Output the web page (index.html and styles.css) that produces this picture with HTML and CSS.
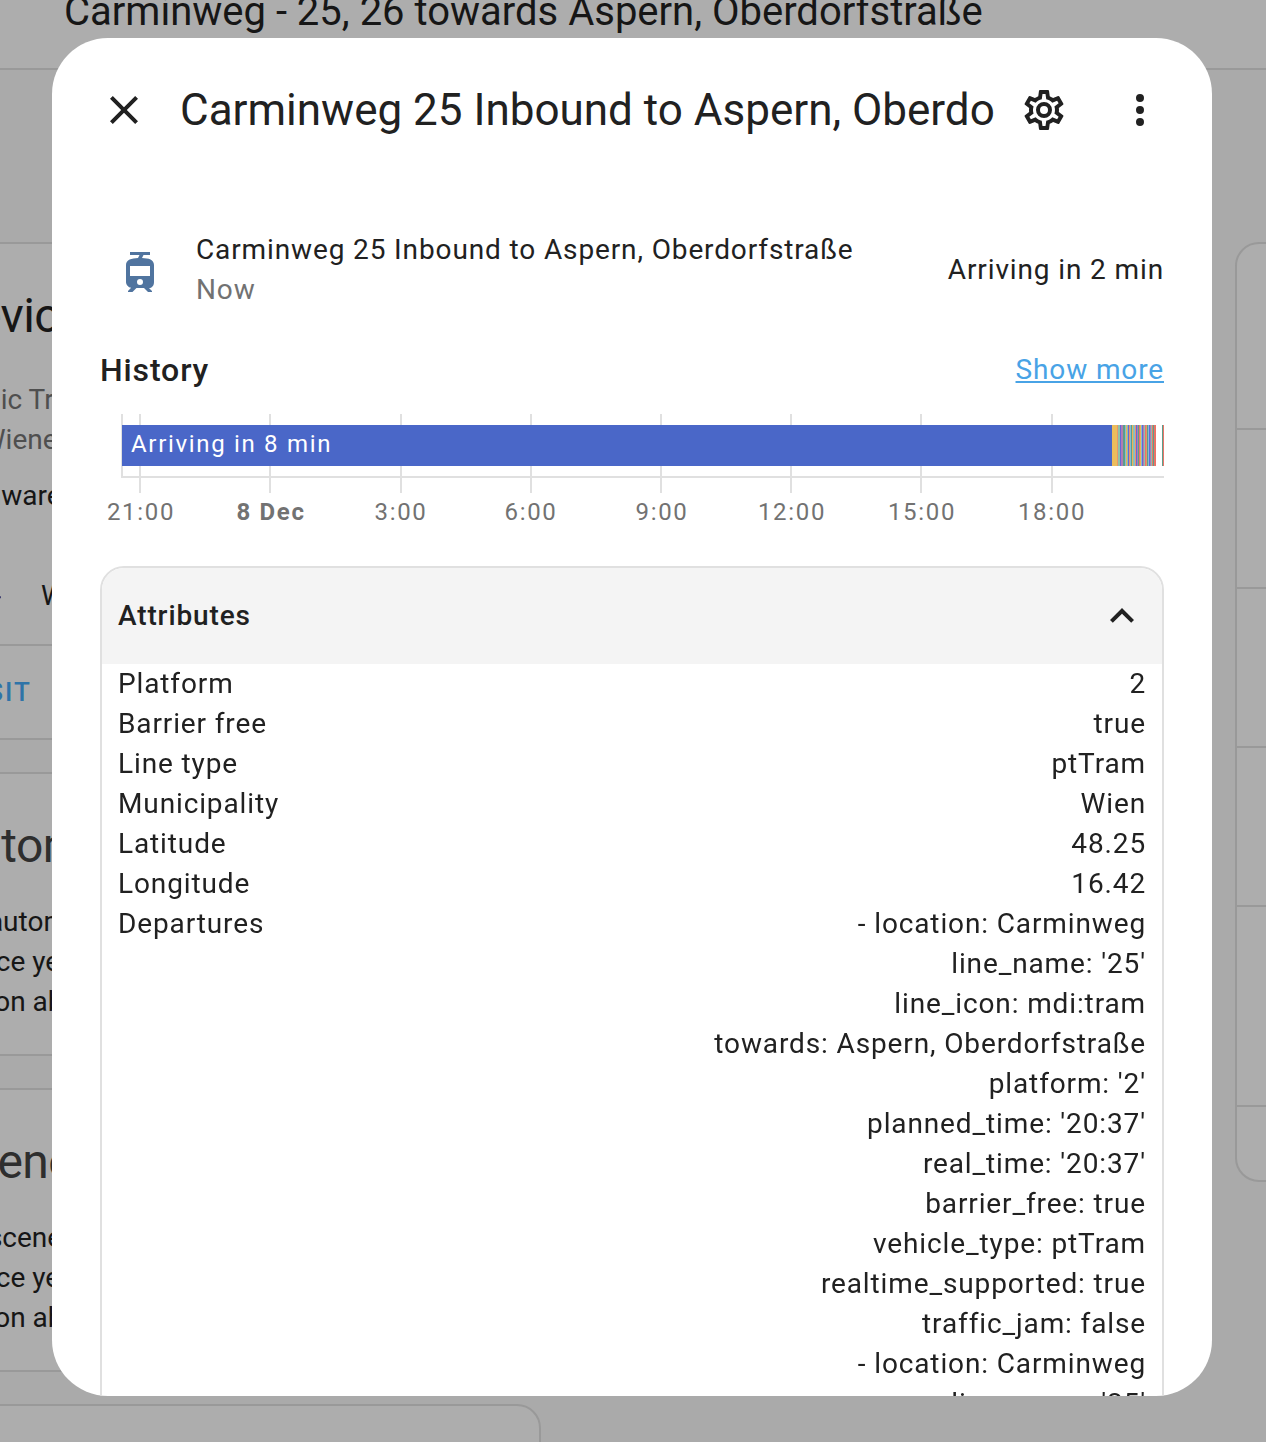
FILE: index.html
```html
<!DOCTYPE html>
<html lang="en">
<head>
<meta charset="utf-8">
<meta name="viewport" content="width=device-width, initial-scale=1">
<title>Carminweg 25 Inbound to Aspern, Oberdorfstraße</title>
<link rel="stylesheet" href="styles.css">
</head>
<body>
<div class="page">
  <header class="toolbar"><h1 class="toolbar-title">Carminweg - 25, 26 towards Aspern, Oberdorfstraße</h1></header>
  <main class="columns">
    <div class="column">
      <section class="card">
        <h2 class="card-title device-title">Device info</h2>
        <div class="card-body">
          <p class="muted">Public Transport<br>by Wiener Linien</p>
          <p class="firmware">Firmware: 1.0</p>
          <div class="brand">
            <svg class="brand-logo" viewBox="0 0 56 32" aria-hidden="true"><path d="M44 7h11v2H44z" fill="#9c5555"/><path d="M44 17h10l2-1v2l-2 1H44z" fill="#3f3f70"/></svg>
            <span>Wiener Linien</span>
          </div>
        </div>
        <div class="card-actions"><a class="visit" href="#visit">Visit</a></div>
      </section>
      <section class="card">
        <h2 class="card-title">Automations</h2>
        <p class="card-body">No automations use this<br>device yet. Use the<br>button above.</p>
      </section>
      <section class="card">
        <h2 class="card-title">Scenes</h2>
        <p class="card-body">No scenes use this<br>device yet. Use the<br>button above.</p>
      </section>
      <section class="card">
        <h2 class="card-title">Scripts</h2>
      </section>
    </div>
    <div class="column"></div>
    <div class="column">
      <ul class="card log">
        <li class="log-first"></li>
        <li class="log-item"></li>
        <li class="log-item"></li>
        <li class="log-item"></li>
        <li class="log-tall"></li>
        <li class="log-last"></li>
      </ul>
    </div>
  </main>
</div>

<div class="scrim">
  <section class="dialog" role="dialog" aria-modal="true" aria-labelledby="dialog-title">
    <header class="dialog-header">
      <button class="icon-button" type="button" aria-label="Close">
        <svg class="icon" viewBox="0 0 24 24"><path d="M19,6.41L17.59,5L12,10.59L6.41,5L5,6.41L10.59,12L5,17.59L6.41,19L12,13.41L17.59,19L19,17.59L13.41,12L19,6.41Z"/></svg>
      </button>
      <h2 class="dialog-title" id="dialog-title">Carminweg 25 Inbound to Aspern, Oberdorfstraße</h2>
      <button class="icon-button" type="button" aria-label="Settings">
        <svg class="icon" viewBox="0 0 24 24"><path d="M12,8A4,4 0 0,1 16,12A4,4 0 0,1 12,16A4,4 0 0,1 8,12A4,4 0 0,1 12,8M12,10A2,2 0 0,0 10,12A2,2 0 0,0 12,14A2,2 0 0,0 14,12A2,2 0 0,0 12,10M10,22C9.75,22 9.54,21.82 9.5,21.58L9.13,18.93C8.5,18.68 7.96,18.34 7.44,17.94L4.95,18.95C4.73,19.03 4.46,18.95 4.34,18.73L2.34,15.27C2.21,15.05 2.27,14.78 2.46,14.63L4.57,12.97L4.5,12L4.57,11L2.46,9.37C2.27,9.22 2.21,8.95 2.34,8.73L4.34,5.27C4.46,5.05 4.73,4.96 4.95,5.05L7.44,6.05C7.96,5.66 8.5,5.32 9.13,5.07L9.5,2.42C9.54,2.18 9.75,2 10,2H14C14.25,2 14.46,2.18 14.5,2.42L14.87,5.07C15.5,5.32 16.04,5.66 16.56,6.05L19.05,5.05C19.27,4.96 19.54,5.05 19.66,5.27L21.66,8.73C21.79,8.95 21.73,9.22 21.54,9.37L19.43,11L19.5,12L19.43,13L21.54,14.63C21.73,14.78 21.79,15.05 21.66,15.27L19.66,18.73C19.54,18.95 19.27,19.04 19.05,18.95L16.56,17.95C16.04,18.34 15.5,18.68 14.87,18.93L14.5,21.58C14.46,21.82 14.25,22 14,22H10M11.25,4L10.88,6.61C9.68,6.86 8.62,7.5 7.85,8.39L5.44,7.35L4.69,8.65L6.8,10.2C6.4,11.37 6.4,12.64 6.8,13.8L4.68,15.36L5.43,16.66L7.86,15.62C8.63,16.5 9.68,17.14 10.87,17.38L11.24,20H12.76L13.13,17.39C14.32,17.14 15.37,16.5 16.14,15.62L18.57,16.66L19.32,15.36L17.2,13.81C17.6,12.64 17.6,11.37 17.2,10.2L19.31,8.65L18.56,7.35L16.15,8.39C15.38,7.5 14.32,6.86 13.12,6.62L12.75,4H11.25Z"/></svg>
      </button>
      <button class="icon-button" type="button" aria-label="More options">
        <svg class="icon" viewBox="0 0 24 24"><path d="M12,16A2,2 0 0,1 14,18A2,2 0 0,1 12,20A2,2 0 0,1 10,18A2,2 0 0,1 12,16M12,10A2,2 0 0,1 14,12A2,2 0 0,1 12,14A2,2 0 0,1 10,12A2,2 0 0,1 12,10M12,4A2,2 0 0,1 14,6A2,2 0 0,1 12,8A2,2 0 0,1 10,6A2,2 0 0,1 12,4Z"/></svg>
      </button>
    </header>
    <div class="dialog-content">
      <div class="state">
        <div class="state-badge">
          <svg class="icon tram" viewBox="0 0 24 24"><path d="M19,16.94V8.5C19,5.79 16.39,5.1 13,5L13.75,3.5H17V2H7V3.5H11.75L11,5C7.86,5.1 5,5.8 5,8.5V16.94C5,18.39 6.19,19.6 7.59,19.91L6,21.5V22H8.23L10.23,20H14L16,22H18V21.5L16.5,20H16.42C18.11,20 19,18.63 19,16.94M12,18.5A1.5,1.5 0 0,1 10.5,17A1.5,1.5 0 0,1 12,15.5A1.5,1.5 0 0,1 13.5,17A1.5,1.5 0 0,1 12,18.5M17,14H7V9H17V14Z"/></svg>
        </div>
        <div class="state-info">
          <div>Carminweg 25 Inbound to Aspern, Oberdorfstraße</div>
          <div class="state-time">Now</div>
        </div>
        <div class="state-value">Arriving in 2 min</div>
      </div>
      <div class="history-header">
        <h3 class="history-title">History</h3>
        <a class="show-more" href="#history">Show more</a>
      </div>
      <svg class="chart" viewBox="0 0 1064 128" role="img" aria-label="State history">
        <g class="grid-lines">
          <path d="M22 8V71M40 8V87M170 8V87M301 8V87M431 8V87M561 8V87M691 8V87M821 8V87M952 8V87M21 71H1064"/>
        </g>
        <rect x="22" y="19" width="990" height="41" fill="#4a67c8"/>
        <rect x="1012" y="19" width="6" height="41" fill="#ecbd5c"/>
        <g class="stripes">
          <path stroke="#e8966a" d="M1017.500 19v41M1029.500 19v41M1035.500 19v41M1046.500 19v41"/>
          <path stroke="#8fc3a8" d="M1018.500 19v41M1019.500 19v41M1027.500 19v41M1033.500 19v41M1044.500 19v41M1051.500 19v41"/>
          <path stroke="#6368d8" d="M1020.500 19v41M1028.500 19v41M1036.500 19v41M1042.500 19v41M1049.500 19v41"/>
          <path stroke="#b07cb4" d="M1021.500 19v41M1022.500 19v41M1037.500 19v41M1043.500 19v41M1050.500 19v41"/>
          <path stroke="#5b9f8b" d="M1023.500 19v41M1024.500 19v41M1031.500 19v41M1038.500 19v41M1047.500 19v41M1053.500 19v41"/>
          <path stroke="#ecb25c" d="M1026.500 19v41M1032.500 19v41M1040.500 19v41"/>
          <path stroke="#86bcd4" d="M1025.500 19v41M1030.500 19v41M1034.500 19v41M1041.500 19v41M1048.500 19v41"/>
          <path stroke="#ea7468" d="M1039.500 19v41M1045.500 19v41M1052.500 19v41M1054.500 19v41M1055.500 19v41M1063.500 19v41"/>
          <path stroke="#5b9f8b" d="M1062.500 19v41"/>
        </g>
        <text class="bar-label" x="31" y="46">Arriving in 8 min</text>
        <g class="ticks">
          <text x="41" y="114">21:00</text>
          <text class="tick-day" x="171" y="114">8 Dec</text>
          <text x="301" y="114">3:00</text>
          <text x="431" y="114">6:00</text>
          <text x="562" y="114">9:00</text>
          <text x="692" y="114">12:00</text>
          <text x="822" y="114">15:00</text>
          <text x="952" y="114">18:00</text>
        </g>
      </svg>
      <div class="attributes">
        <button class="attributes-toggle" type="button" aria-expanded="true" aria-controls="attribute-table">
          <span>Attributes</span>
          <svg class="icon" viewBox="0 0 24 24"><path d="M7.41,15.41L12,10.83L16.59,15.41L18,14L12,8L6,14L7.41,15.41Z"/></svg>
        </button>
        <table class="attribute-table" id="attribute-table">
          <tbody>
            <tr><th scope="row">Platform</th><td>2</td></tr>
            <tr><th scope="row">Barrier free</th><td>true</td></tr>
            <tr><th scope="row">Line type</th><td>ptTram</td></tr>
            <tr><th scope="row">Municipality</th><td>Wien</td></tr>
            <tr><th scope="row">Latitude</th><td>48.25</td></tr>
            <tr><th scope="row">Longitude</th><td>16.42</td></tr>
            <tr><th scope="row">Departures</th><td>- location: Carminweg<br>line_name: '25'<br>line_icon: mdi:tram<br>towards: Aspern, Oberdorfstraße<br>platform: '2'<br>planned_time: '20:37'<br>real_time: '20:37'<br>barrier_free: true<br>vehicle_type: ptTram<br>realtime_supported: true<br>traffic_jam: false<br>- location: Carminweg<br>line_name: '25'</td></tr>
          </tbody>
        </table>
      </div>
    </div>
  </section>
</div>
</body>
</html>
```
FILE: styles.css
```css
* { box-sizing: border-box; }

body {
  margin: 0;
  color: #212121;
  background: #aaa;
  font: 400 28px/40px Roboto, "Liberation Sans", sans-serif;
}

h1, h2, h3, p, ul { margin: 0; padding: 0; font-weight: 400; }

/* Device page, already dimmed */
.page {
  height: 100vh;
  overflow: hidden;
  color: #161616;
}

.toolbar {
  height: 70px;
  padding-left: 64px;
  background: #adadad;
  border-bottom: 2px solid #999;
}

.toolbar-title { font-size: 40px; line-height: 24px; white-space: nowrap; }

.columns {
  display: grid;
  grid-template-columns: repeat(3, 1fr);
  gap: 32px;
  align-items: start;
  margin: 172px -599px 0 -89px;
}

.column { display: grid; gap: 32px; }

.card {
  background: #adadad;
  border: 2px solid #999;
  border-radius: 24px;
}

.card-title {
  padding: 24px 32px 8px;
  color: #2e2e2e;
  font-size: 48px;
  letter-spacing: -0.012em;
  line-height: 96px;
}

.device-title { padding-bottom: 16px; color: #161616; }
.card-body { padding: 0 32px 32px; }
.device-title + .card-body { padding-bottom: 16px; }
.muted { color: #4f4f4f; }
.firmware { margin: 16px 0 48px; }

.brand {
  display: flex;
  align-items: center;
  gap: 40px;
  height: 64px;
}

.brand-logo { width: 56px; height: 32px; }

.card-actions {
  display: flex;
  align-items: center;
  height: 94px;
  padding: 0 46px;
  border-top: 2px solid #999;
}

.visit {
  color: #2f74a8;
  font-size: 26px;
  font-weight: 500;
  letter-spacing: 2px;
  text-decoration: none;
  text-transform: uppercase;
}

.log { list-style: none; }
.log li + li { border-top: 2px solid #999; }
.log-first { height: 184px; }
.log-item { height: 159px; }
.log-tall { height: 200px; }
.log-last { height: 75px; }

/* Dialog */
.scrim {
  position: fixed;
  inset: 0;
  display: flex;
  padding: 38px 54px 46px 52px;
}

.dialog {
  display: flex;
  flex: 1;
  flex-direction: column;
  min-width: 0;
  overflow: hidden;
  background: #fff;
  border-radius: 56px;
}

.dialog-header {
  display: flex;
  align-items: center;
  padding: 24px 24px 0;
}

.dialog-title {
  flex: 1;
  min-width: 0;
  padding-left: 8px;
  overflow: hidden;
  font-size: 44px;
  line-height: 56px;
  white-space: nowrap;
}

.icon-button {
  flex: none;
  width: 96px;
  height: 96px;
  padding: 24px;
  color: inherit;
  background: none;
  border: 0;
}

.icon { display: block; width: 48px; height: 48px; fill: currentColor; }

.dialog-content {
  flex: 1;
  min-height: 0;
  padding: 72px 48px 0;
  overflow-y: auto;
  letter-spacing: 0.03125em;
  scrollbar-width: none;
}

.state { display: flex; align-items: center; }
.state-badge { display: flex; justify-content: center; width: 80px; padding-top: 4px; margin-right: 16px; }
.tram { color: #50749f; }
.state-info { flex: 1; }
.state-time { color: #727272; }

.history-header {
  display: flex;
  align-items: center;
  justify-content: space-between;
  margin: 40px 0 16px;
}

.history-title { font-size: 32px; font-weight: 500; }
.show-more { color: #48a3e6; }

.chart { display: block; width: 100%; }
.grid-lines { fill: none; stroke: #e0e0e0; stroke-width: 2; }
.stripes { stroke-width: 1; }
.bar-label,
.ticks { font-size: 24px; letter-spacing: 0.07em; }
.bar-label { fill: #fff; }
.ticks { fill: #727272; text-anchor: middle; }
.tick-day { font-weight: 700; }

.attributes {
  margin-top: 32px;
  overflow: hidden;
  border: 2px solid #e0e0e0;
  border-radius: 24px;
}

.attributes-toggle {
  display: flex;
  align-items: center;
  justify-content: space-between;
  width: 100%;
  height: 96px;
  padding: 0 16px;
  color: inherit;
  background: #f4f4f4;
  border: 0;
  font: inherit;
  font-weight: 500;
  letter-spacing: inherit;
}

.attribute-table {
  width: 100%;
  padding: 0 16px;
  border-spacing: 0;
}

.attribute-table th,
.attribute-table td { padding: 0; font-weight: 400; vertical-align: top; }
.attribute-table th { text-align: left; }
.attribute-table td { text-align: right; }
```
